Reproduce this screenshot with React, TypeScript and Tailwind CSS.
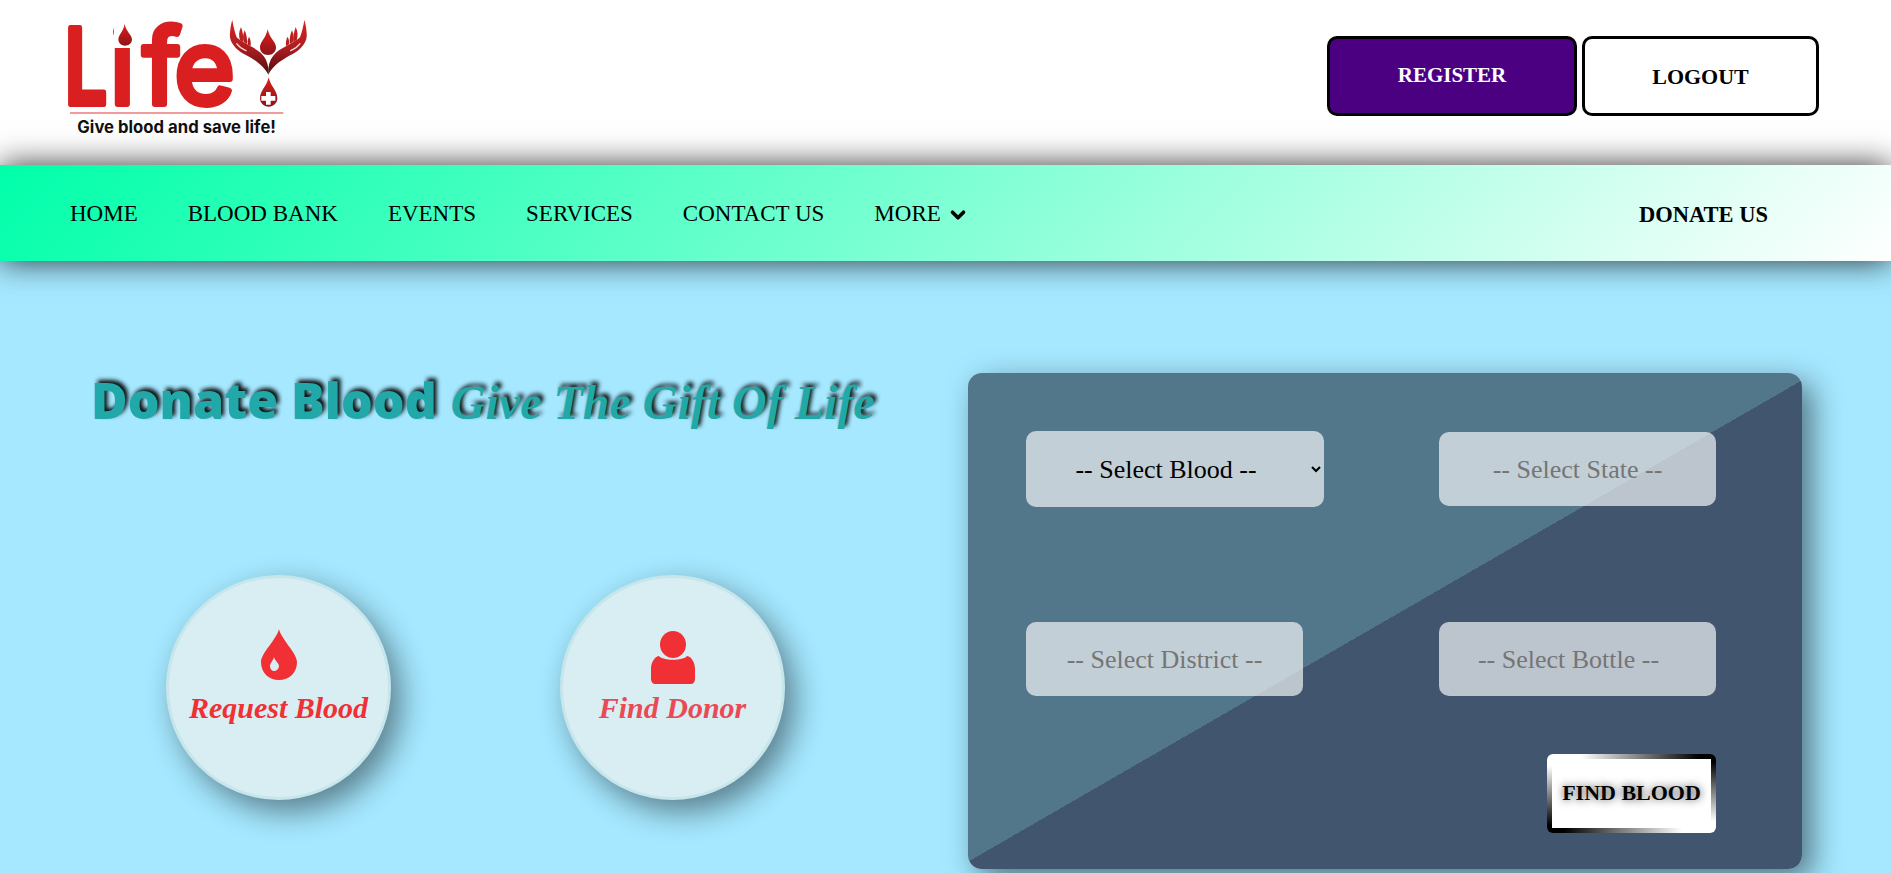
import { ChevronDown } from "lucide-react";

const navItems = ["HOME", "BLOOD BANK", "EVENTS", "SERVICES", "CONTACT US"];

function Hand({ transform }: { transform?: string }) {
  return (
    <g transform={transform}>
      <path d="M685 224C672 196 640 176 612 162C588 150 566 125 570 100C571 85 573 72 577 60C580 80 584 95 590 112C600 124 640 140 662 158C675 170 683 185 685 205Z" fill="url(#handRed)" />
      <path d="M603 81C596 96 596 108 600 120L610 127C612 112 608 96 603 81Z" fill="url(#handRed)" />
      <path d="M614 91C608 104 608 116 612 127L621 132C622 118 620 104 614 91Z" fill="url(#handRed)" />
      <path d="M627 110C622 120 622 128 624 134L632 138C633 128 632 118 627 110Z" fill="url(#handRed)" />
      <path d="M590 131C598 142 608 148 618 152" fill="none" stroke="#f6d5d5" strokeWidth="4" strokeLinecap="round" />
    </g>
  );
}

function Logo() {
  return (
    <svg width="300" height="150" viewBox="0 0 900 450" className="block shrink-0">
      <defs>
        <linearGradient id="dropRed" x1="0" y1="0" x2="0" y2="1">
          <stop offset="0" stopColor="#d8201f" />
          <stop offset="1" stopColor="#8f1216" />
        </linearGradient>
        <linearGradient id="handRed" gradientUnits="userSpaceOnUse" x1="0" y1="60" x2="0" y2="224">
          <stop offset="0" stopColor="#d92422" />
          <stop offset="0.55" stopColor="#a81c1e" />
          <stop offset="1" stopColor="#4a0d10" />
        </linearGradient>
      </defs>
      {/* the L of the logo is much narrower than any installed font's, so it is squeezed on its own */}
      <text
        transform="translate(74 311) scale(0.72 1)"
        fontFamily="Inter, sans-serif"
        fontWeight="600"
        fontSize="312"
        fill="#d91f1f"
        stroke="#d91f1f"
        strokeWidth="18"
        strokeLinejoin="round"
      >
        L
      </text>
      <text
        x="209 308 403"
        y="311"
        fontFamily="Inter, sans-serif"
        fontWeight="400"
        fontSize="312"
        fill="#d91f1f"
        stroke="#d91f1f"
        strokeWidth="18"
        strokeLinejoin="round"
      >
        ife
      </text>
      <rect x="222" y="20" width="62" height="124" fill="#fff" />
      <path d="M254 72C250 95 235 105 235 118C235 130 245 137 255 137C266 137 276 130 276 118C276 105 258 95 254 72Z" fill="url(#dropRed)" />
      <Hand />
      <Hand transform="translate(1370 0) scale(-1 1)" />
      <path d="M683 88C678 115 660 125 660 142C660 156 670 165 684 165C698 165 708 156 708 142C708 125 688 115 683 88Z" fill="url(#dropRed)" />
      <path d="M686 232C680 260 660 272 660 295C660 310 672 320 686 320C700 320 712 310 712 295C712 272 692 260 686 232Z" fill="url(#dropRed)" />
      <path d="M678 276h14v12h14v14h-14v12h-14v-12h-14v-14h14z" fill="#fff" />
      <rect x="90" y="337" width="640" height="4" fill="#e76a6a" />
      <text x="112" y="398" fontFamily="Inter, sans-serif" fontWeight="700" fontSize="50" textLength="596" fill="#111">
        Give blood and save life!
      </text>
    </svg>
  );
}

function DropIcon() {
  return (
    <svg width="36" height="51" viewBox="0 0 36 51" className="mb-[4px] block">
      <path d="M18 0C16 10 0 24 0 33C0 44 8 51 18 51C28 51 36 44 36 33C36 24 20 10 18 0Z" fill="#f03035" />
      <path d="M13 28C12 32 9 34 9 37C9 40 11 42 13 42C15 42 18 40 18 37C18 34 14 32 13 28Z" fill="#d9eef3" />
    </svg>
  );
}

function PersonIcon() {
  return (
    <svg width="44" height="53" viewBox="0 0 44 53" className="block">
      <ellipse cx="22" cy="13.5" rx="13" ry="13.5" fill="#f03035" />
      <path d="M8 25C12 30 32 30 36 25C41 26 44 32 44 38V48C44 51 42 53 40 53H4C2 53 0 51 0 48V38C0 32 3 26 8 25Z" fill="#f03035" />
    </svg>
  );
}

function ActionCircle({ icon, label, color }: { icon: React.ReactNode; label: string; color: string }) {
  return (
    <div className="flex h-[225px] w-[225px] flex-col items-center rounded-full border-[3px] border-[#c6e6ec] bg-[#d9eef3] pt-[50px] shadow-[10px_12px_30px_rgba(0,0,0,0.45)]">
      <div className="flex h-[56px] items-end">{icon}</div>
      <span className={`mt-[6px] font-['Liberation_Serif',serif] text-[30px] font-bold italic leading-[36px] ${color}`}>{label}</span>
    </div>
  );
}

const fieldClass =
  "h-[74px] w-[277px] rounded-[10px] bg-white/65 pt-[2px] text-center font-['Liberation_Serif',serif] text-[26px] text-black outline-none placeholder:text-[#757575]";

export default function App() {
  return (
    <div className="h-[873px] w-full overflow-hidden bg-[#a5e8ff] font-['Liberation_Serif',serif] text-black">
      <header className="flex h-[165px] items-start justify-between bg-white pl-[40px] pr-[72px]">
        <Logo />
        <div className="mt-[36px] flex gap-[5px]">
          <button className="h-[80px] w-[250px] rounded-[10px] border-[3px] border-black bg-[#4b0082] text-[21px] font-bold text-white">
            REGISTER
          </button>
          <button className="h-[80px] w-[237px] rounded-[10px] border-[3px] border-black bg-white text-[22px] font-bold text-black">
            LOGOUT
          </button>
        </div>
      </header>

      <nav className="relative flex h-[96px] items-center justify-between bg-[linear-gradient(135deg,#00ffaa,#ffffff)] pl-[70px] pr-[123px] pt-[3px] shadow-[0_0_30px_rgba(0,0,0,0.8)]">
        <ul className="flex items-center gap-[50px] text-[23px]">
          {navItems.map((item) => (
            <li key={item}>{item}</li>
          ))}
          <li className="flex items-center gap-[6px]">
            MORE
            <ChevronDown size={22} strokeWidth={4} />
          </li>
        </ul>
        <span className="text-[22.5px] font-bold">DONATE US</span>
      </nav>

      <main className="flex pl-[96px] pt-[112px]">
        <div className="w-[872px]">
          <h1 className="-ml-[5px] -mt-[1px] flex h-[56px] items-baseline gap-[14px] text-[#20a9a8] [text-shadow:3px_-3px_4px_rgba(0,0,0,0.95)]">
            <span className="font-['Open_Sans',sans-serif] text-[50px] font-extrabold leading-[56px]">Donate Blood</span>
            <span className="font-['Liberation_Serif',serif] text-[48px] font-bold italic leading-[56px]">Give The Gift Of Life</span>
          </h1>
          <div className="ml-[70px] mt-[147px] flex gap-[169px]">
            <ActionCircle icon={<DropIcon />} label="Request Blood" color="text-[#f03035]" />
            <ActionCircle icon={<PersonIcon />} label="Find Donor" color="text-[#ea4a55]" />
          </div>
        </div>

        <form className="h-[496px] w-[834px] rounded-[14px] bg-[linear-gradient(150deg,#53778a_50%,#41556f_50%)] pl-[58px] pt-[58px] shadow-[10px_10px_30px_rgba(0,0,0,0.5)]">
          <div className="grid grid-cols-[413px_277px] items-center gap-y-[115px]">
            <select className="h-[76px] w-[298px] rounded-[10px] bg-white/65 pr-[6px] text-center text-[26px] outline-none">
              <option>-- Select Blood --</option>
            </select>
            <input className={fieldClass} placeholder="-- Select State --" />
            <input className={fieldClass} placeholder="-- Select District --" />
            <input className={`${fieldClass} pr-[18px]`} placeholder="-- Select Bottle --" />
          </div>
          <div className="mt-[58px] grid grid-cols-[413px_277px]">
            <button
              type="button"
              className="col-start-2 h-[79px] w-[169px] justify-self-end rounded-[6px] pb-[3px] text-[22px] font-bold [background:linear-gradient(90deg,#fff_20%,#000_90%)_top/100%_5px_no-repeat,linear-gradient(90deg,#000_10%,#fff_80%)_bottom/100%_5px_no-repeat,linear-gradient(180deg,#fff_15%,#000_90%)_left/5px_100%_no-repeat,linear-gradient(180deg,#000_10%,#fff_85%)_right/5px_100%_no-repeat,#fff] [text-shadow:0_0_8px_rgba(0,0,0,0.75)]"
            >
              FIND BLOOD
            </button>
          </div>
        </form>
      </main>
    </div>
  );
}
